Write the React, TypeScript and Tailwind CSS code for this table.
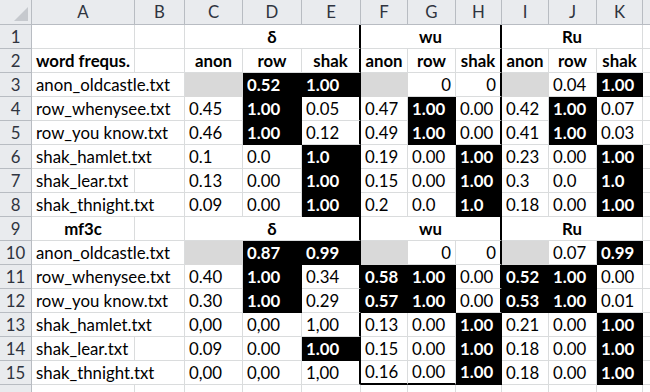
import React from 'react';

type Cell = {
  t?: string;
  black?: boolean;
  gray?: boolean;
  right?: boolean;
  center?: boolean;
  bold?: boolean;
  span?: number;
};

const letters = ['A', 'B', 'C', 'D', 'E', 'F', 'G', 'H', 'I', 'J', 'K'];

const n = (t: string): Cell => ({ t });
const b = (t: string): Cell => ({ t, black: true, bold: true });
const g: Cell = { gray: true };
const z: Cell = { t: '0', right: true };

// A column text that spills over into B
const name = (t: string): Cell => ({ t, span: 2 });
const nameFit = (t: string): Cell[] => [{ t }, {}];

const heads = (label: string, first: string): Cell[] => [
  { t: label, bold: true, center: true },
  {},
  { t: first, bold: true, center: true, span: 3 },
  { t: 'wu', bold: true, center: true, span: 3 },
  { t: 'Ru', bold: true, center: true, span: 3 },
];

const rows: Cell[][] = [
  [{}, {}, { t: 'δ', bold: true, center: true, span: 3 }, { t: 'wu', bold: true, center: true, span: 3 }, { t: 'Ru', bold: true, center: true, span: 3 }],
  [
    { t: 'word frequs.', bold: true },
    {},
    ...['anon', 'row', 'shak', 'anon', 'row', 'shak', 'anon', 'row', 'shak'].map(t => ({ t, bold: true, center: true })),
  ],
  [name('anon_oldcastle.txt'), g, b('0.52'), b('1.00'), g, z, z, g, n('0.04'), b('1.00')],
  [name('row_whenysee.txt'), n('0.45'), b('1.00'), n('0.05'), n('0.47'), b('1.00'), n('0.00'), n('0.42'), b('1.00'), n('0.07')],
  [name('row_you know.txt'), n('0.46'), b('1.00'), n('0.12'), n('0.49'), b('1.00'), n('0.00'), n('0.41'), b('1.00'), n('0.03')],
  [name('shak_hamlet.txt'), n('0.1'), n('0.0'), b('1.0'), n('0.19'), n('0.00'), b('1.00'), n('0.23'), n('0.00'), b('1.00')],
  [...nameFit('shak_lear.txt'), n('0.13'), n('0.00'), b('1.00'), n('0.15'), n('0.00'), b('1.00'), n('0.3'), n('0.0'), b('1.0')],
  [name('shak_thnight.txt'), n('0.09'), n('0.00'), b('1.00'), n('0.2'), n('0.0'), b('1.0'), n('0.18'), n('0.00'), b('1.00')],
  heads('mf3c', 'δ'),
  [name('anon_oldcastle.txt'), g, b('0.87'), b('0.99'), g, z, z, g, n('0.07'), b('0.99')],
  [name('row_whenysee.txt'), n('0.40'), b('1.00'), n('0.34'), b('0.58'), b('1.00'), n('0.00'), b('0.52'), b('1.00'), n('0.00')],
  [name('row_you know.txt'), n('0.30'), b('1.00'), n('0.29'), b('0.57'), b('1.00'), n('0.00'), b('0.53'), b('1.00'), n('0.01')],
  [name('shak_hamlet.txt'), n('0,00'), n('0,00'), n('1,00'), n('0.13'), n('0.00'), b('1.00'), n('0.21'), n('0.00'), b('1.00')],
  [...nameFit('shak_lear.txt'), n('0.09'), n('0.00'), b('1.00'), n('0.15'), n('0.00'), b('1.00'), n('0.18'), n('0.00'), b('1.00')],
  [name('shak_thnight.txt'), n('0,00'), n('0,00'), n('1,00'), n('0.16'), n('0.00'), b('1.00'), n('0.18'), n('0.00'), b('1.00')],
];

function SheetCell({ c, col, row }: { c: Cell; col: number; row: number }) {
  const span = c.span ?? 1;
  const lastCol = col + span - 1;
  // thick separators sit after E (index 4) and H (index 7)
  const thickR = lastCol === 4 || lastCol === 7;
  const thickB = row === 15 && col >= 5 && col <= 7;
  return (
    <div
      className={[
        'h-[24px] flex items-end pb-[1px] px-[4px] whitespace-nowrap overflow-visible border-b border-r',
        span === 2 ? 'col-span-2' : span === 3 ? 'col-span-3' : '',
        c.black ? 'bg-black text-white border-black' : c.gray ? 'bg-[#d9d9d9] border-[#d9d9d9]' : 'bg-white border-[#dadcdd]',
        thickR ? 'border-r-2 border-r-black' : '',
        thickB ? 'border-b-2 border-b-black' : '',
        c.bold ? 'font-bold' : '',
        c.center ? 'justify-center' : c.right ? 'justify-end' : 'justify-start',
      ].join(' ')}
    >
      <span className="leading-[20px]">{c.t}</span>
    </div>
  );
}

export default function App() {
  return (
    <div className="w-[650px] h-[392px] overflow-hidden bg-white text-[16.8px] text-black font-['Lato','Liberation_Sans',sans-serif]">
      <div className="grid grid-cols-[32px_103px_50px_58px_59px_59px_47px_48px_46px_47px_48px_46px_1fr] auto-rows-[24px] grid-rows-[25px]">
        <div className="h-[25px] bg-[#e9ebee] border-b border-r border-[#b8bcc2] relative">
          <svg className="absolute right-[3px] bottom-[3px]" width="14" height="14" viewBox="0 0 14 14">
            <polygon points="14,0 14,14 0,14" fill="#c6c9ce" />
          </svg>
        </div>
        {letters.map(l => (
          <div key={l} className="h-[25px] bg-[#e9ebee] border-b border-r border-[#b8bcc2] flex items-center justify-center text-[#2f3440]">
            {l}
          </div>
        ))}
        <div className="h-[25px] bg-[#e9ebee] border-b border-[#b8bcc2]" />
        {rows.map((r, i) => {
          let col = 0;
          return (
            <React.Fragment key={i}>
              <div className="h-[24px] bg-[#e9ebee] border-b border-r border-[#b8bcc2] flex items-center justify-center text-[#2f3440]">
                {i + 1}
              </div>
              {r.map((c, j) => {
                const start = col;
                col += c.span ?? 1;
                return <SheetCell key={j} c={c} col={start} row={i + 1} />;
              })}
              <div className="h-[24px] bg-white border-b border-[#dadcdd]" />
            </React.Fragment>
          );
        })}
        <div className="h-[24px] bg-[#e9ebee] border-r border-[#b8bcc2]" />
        <div className="h-[24px] border-r border-[#dadcdd]" />
        {Array.from({ length: 10 }).map((_, k) => (
          <div key={k} className="h-[24px] border-r border-[#dadcdd]" />
        ))}
        <div />
      </div>
    </div>
  );
}
